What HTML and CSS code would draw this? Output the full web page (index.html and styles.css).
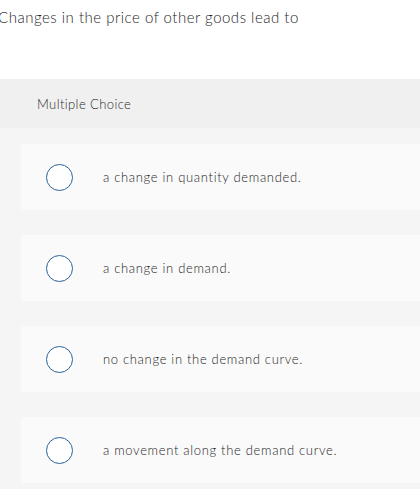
FILE: index.html
```html
<!DOCTYPE html>
<html lang="en">
<head>
  <meta charset="UTF-8">
  <meta name="viewport" content="width=device-width, initial-scale=1">
  <title>Multiple Choice</title>
  <link rel="stylesheet" href="styles.css">
</head>
<body>

<section class="question">
  <p class="question-text">Changes in the price of other goods lead to</p>
</section>

<section class="choice-block">
  <div class="choice-header">Multiple Choice</div>

  <div class="choice-list">
    <label class="choice-card">
      <span class="radio"></span>
      <span class="choice-text">a change in quantity demanded.</span>
    </label>

    <label class="choice-card">
      <span class="radio"></span>
      <span class="choice-text">a change in demand.</span>
    </label>

    <label class="choice-card">
      <span class="radio"></span>
      <span class="choice-text">no change in the demand curve.</span>
    </label>

    <label class="choice-card">
      <span class="radio"></span>
      <span class="choice-text">a movement along the demand curve.</span>
    </label>
  </div>
</section>

</body>
</html>
```

FILE: styles.css
```css
body {
  font-family: 'Lato', 'Open Sans', sans-serif;
  font-weight: 300;
  background: #fff;
  color: #1f1f1f;
  margin: 0;
  padding: 0;
  overflow: hidden;
}

.question {
  height: 79px;
}

.question-text {
  margin: 0 0 0 -2px;
  padding-top: 7px;
  font-size: 15px;
  line-height: 20px;
  letter-spacing: 0.5px;
}

.choice-block {
  background: #f5f5f5;
  min-height: 410px;
}

.choice-header {
  background: #f0f0f0;
  height: 49px;
  line-height: 50px;
  padding-left: 37px;
  font-size: 13px;
  letter-spacing: 0.4px;
  color: #2a2a2a;
}

.choice-list {
  display: flex;
  flex-direction: column;
  gap: 25px;
  padding: 16px 0 0 21px;
}

.choice-card {
  display: flex;
  align-items: center;
  height: 66px;
  background: #fafafa;
  border-radius: 3px 0 0 3px;
  cursor: pointer;
}

.radio {
  width: 25px;
  height: 25px;
  margin-left: 25px;
  border: 1.5px solid #2a6198;
  border-radius: 50%;
  background: #fff;
  flex-shrink: 0;
}

.choice-text {
  margin-left: 30px;
  font-size: 13px;
  letter-spacing: 0.68px;
}
```
